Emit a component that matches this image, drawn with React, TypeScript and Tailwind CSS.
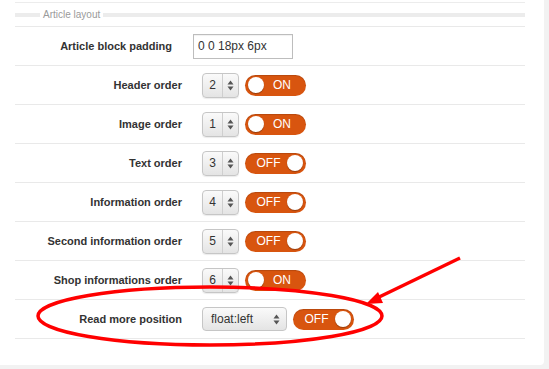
const font = { fontFamily: '"Liberation Sans", Arial, sans-serif' };

const Toggle = ({ on }: { on: boolean }) => (
  <div className="flex h-[21px] w-[61px] items-center rounded-full bg-[#d8550f] px-[3px] shadow-[inset_0_1px_1px_rgba(0,0,0,0.15)]">
    {on ? (
      <>
        <div className="h-[16px] w-[16px] rounded-full bg-white shadow-[0_1px_1px_rgba(0,0,0,0.3)]" />
        <span className="flex-1 pr-[3px] text-center text-[12px] text-white">ON</span>
      </>
    ) : (
      <>
        <span className="flex-1 pl-[2px] text-center text-[12px] text-white">OFF</span>
        <div className="h-[16px] w-[16px] rounded-full bg-white shadow-[0_1px_1px_rgba(0,0,0,0.3)]" />
      </>
    )}
  </div>
);

const Arrows = () => (
  <svg width="7" height="11" viewBox="0 0 7 11" className="fill-[#555]">
    <path d="M3.5 0.5 L6.5 4.5 L0.5 4.5 Z" />
    <path d="M0.5 6.5 L6.5 6.5 L3.5 10.5 Z" />
  </svg>
);

const Spinner = ({ value }: { value: number }) => (
  <div className="flex h-[25px] w-[37px] items-stretch rounded-[4px] border border-[#c6c6c6] bg-gradient-to-b from-[#fafafa] to-[#e4e4e4] shadow-[0_1px_1px_rgba(0,0,0,0.08)]">
    <div className="flex w-[19px] items-center justify-center text-[12px] text-[#333]">{value}</div>
    <div className="flex flex-1 items-center justify-center border-l border-[#cfcfcf]">
      <Arrows />
    </div>
  </div>
);

const Row = ({ label, children }: { label: string; children: React.ReactNode }) => (
  <div className="flex h-[39px] items-center border-b border-[#e9e9e9]">
    <div className="w-[167px] text-right text-[11px] font-bold text-[#333]">{label}</div>
    <div className="ml-[20px] flex items-center gap-[6px]">{children}</div>
  </div>
);

const rows = [
  { label: "Header order", value: 2, on: true },
  { label: "Image order", value: 1, on: true },
  { label: "Text order", value: 3, on: false },
  { label: "Information order", value: 4, on: false },
  { label: "Second information order", value: 5, on: false },
  { label: "Shop informations order", value: 6, on: true },
];

export default function App() {
  return (
    <div className="relative h-[369px] w-[549px] overflow-hidden bg-[#f2f2f2]" style={font}>
      <div className="h-[365px] w-[544px] rounded-br-[4px] bg-white pl-[15px]">
        <div className="w-[510px]">
          <div className="h-[3px] border-b border-[#ececec]" />
          <div className="flex h-[23px] items-center">
            <div className="h-[4px] w-[25px] bg-[#ececec]" />
            <span className="px-[3px] text-[10px] text-[#9a9a9a]">Article layout</span>
            <div className="h-[4px] flex-1 bg-[#ececec]" />
          </div>
          <div className="flex h-[40px] items-center border-y border-[#e9e9e9]">
            <div className="w-[157px] text-right text-[11px] font-bold text-[#333]">Article block padding</div>
            <div className="ml-[21px] flex h-[25px] w-[100px] items-center border border-[#bdbdbd] pl-[4px] text-[12px] text-[#333] shadow-[inset_0_1px_1px_rgba(0,0,0,0.06)]">
              0 0 18px 6px
            </div>
          </div>
          {rows.map((r) => (
            <Row key={r.label} label={r.label}>
              <Spinner value={r.value} />
              <Toggle on={r.on} />
            </Row>
          ))}
          <Row label="Read more position">
            <div className="flex h-[24px] w-[85px] items-center rounded-[4px] border border-[#c6c6c6] bg-gradient-to-b from-[#fafafa] to-[#e4e4e4] pl-[8px] pr-[6px] text-[12px] text-[#333]">
              <span className="flex-1">float:left</span>
              <Arrows />
            </div>
            <Toggle on={false} />
          </Row>
        </div>
      </div>
      <svg className="pointer-events-none absolute left-0 top-0" width="549" height="369">
        <ellipse cx="210" cy="316" rx="172" ry="29" fill="none" stroke="#ff0000" strokeWidth="3.5" />
        <line x1="460" y1="258" x2="375" y2="299" stroke="#ff0000" strokeWidth="3.5" />
        <path d="M366 304 L378 292 L383 303 Z" fill="#ff0000" />
      </svg>
    </div>
  );
}
